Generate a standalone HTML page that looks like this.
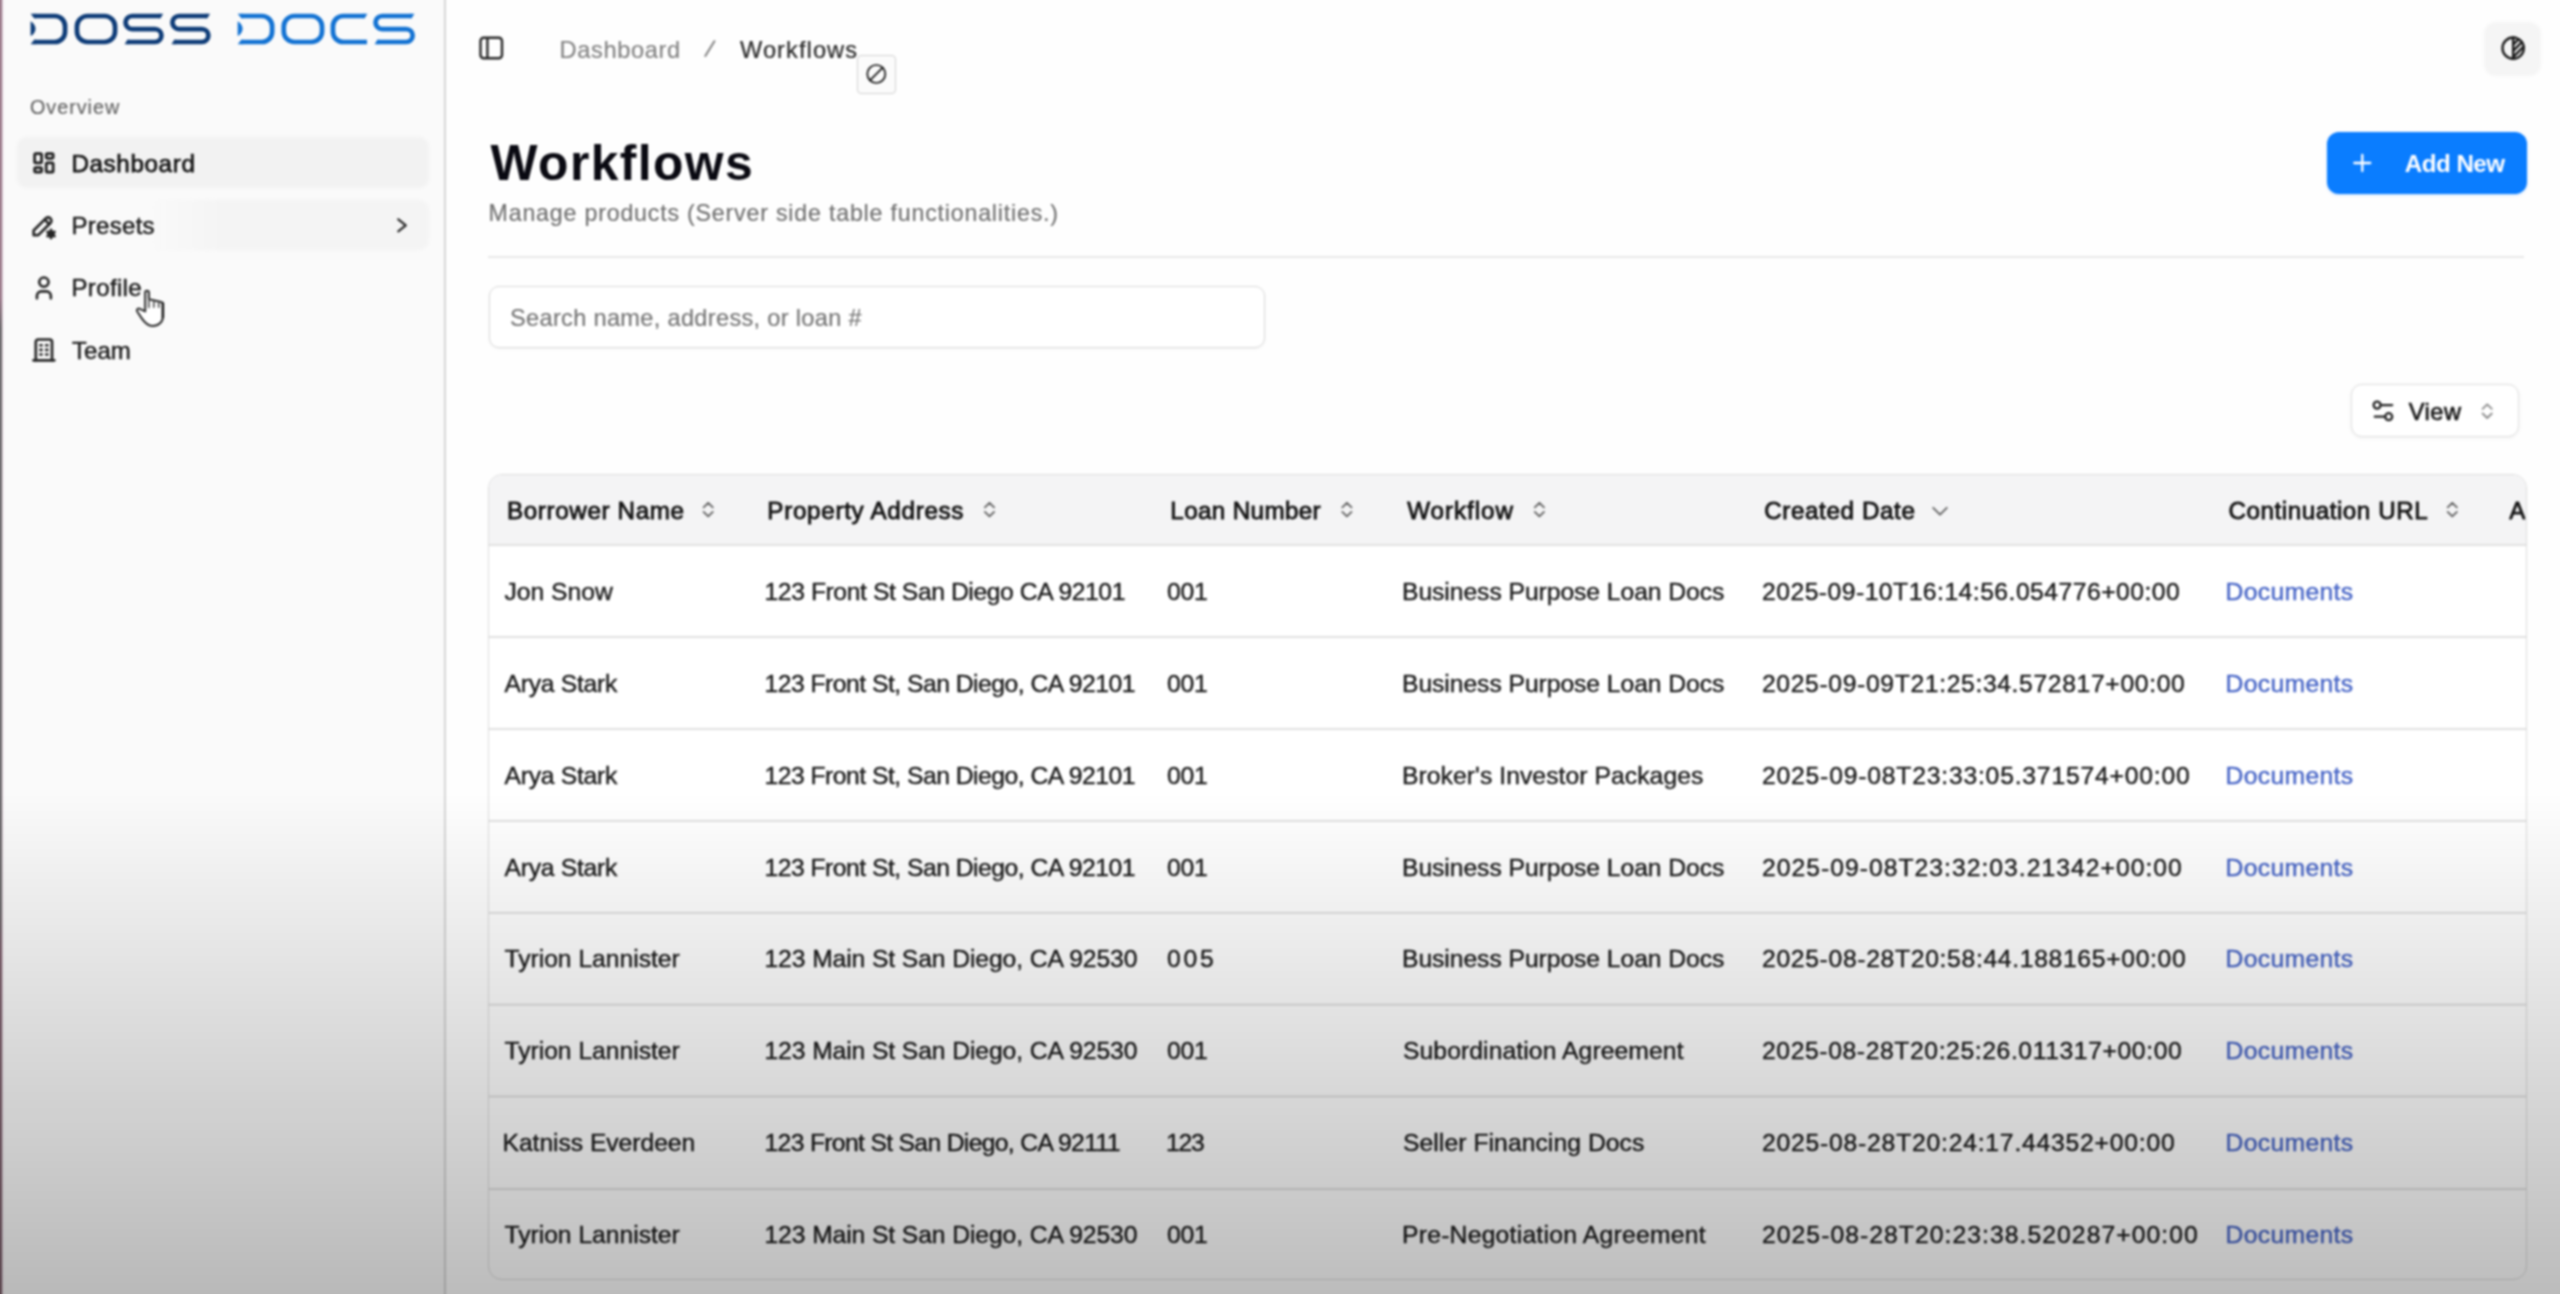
<!DOCTYPE html>
<html lang="en">
<head>
<meta charset="utf-8">
<title>Workflows - Doss Docs</title>
<style>
*{box-sizing:border-box;margin:0;padding:0}
html,body{width:2560px;height:1294px;overflow:hidden;background:#fefefe}
body{position:relative;font-family:"Liberation Sans",sans-serif;-webkit-font-smoothing:antialiased}
.a{position:absolute}
.t{position:absolute;white-space:nowrap;font-family:"Liberation Sans",sans-serif}
svg{position:absolute;overflow:visible}
.ic{fill:none;stroke:#262626;stroke-width:2;stroke-linecap:round;stroke-linejoin:round}
</style>
</head>
<body>
<div id="blurwrap" style="position:absolute;left:-24px;top:-24px;width:2608px;height:1342px;background:#fefefe;filter:blur(.8px)">
<div class="a" style="left:24px;top:24px;width:2560px;height:1294px">
<!-- sidebar -->
<div class="a" style="left:-24px;top:-24px;width:468px;height:1342px;background:#fafafa"></div>
<div class="a" style="left:444px;top:-24px;width:1.5px;height:1342px;background:#d6d6d6"></div>
<div class="a" style="left:-24px;top:-24px;width:26px;height:1342px;background:linear-gradient(to bottom,#9a7989 0px,#9a7989 322px,#6b696b 352px,#6b696b 934px,#7d606c 976px,#795d68 100%)"></div>
<div class="a" style="left:2px;top:-24px;width:2px;height:1342px;background:linear-gradient(to right,rgba(200,170,190,.55),rgba(250,240,250,0))"></div>
<!-- active / hover items -->
<div class="a" style="left:17px;top:137px;width:412px;height:51px;border-radius:10px;background:#f2f2f2;filter:blur(1.5px)"></div>
<div class="a" style="left:150px;top:200px;width:279px;height:50px;border-radius:10px;background:linear-gradient(to right,rgba(244,244,244,0),#f4f4f4 25%);filter:blur(1.5px)"></div>

<!-- header divider -->
<div class="a" style="left:488px;top:256px;width:2036px;height:2px;background:#e8e8e8"></div>

<!-- theme toggle -->
<div class="a" style="left:2483.5px;top:22px;width:57px;height:54px;border-radius:12px;background:#f5f5f5;filter:blur(1.2px)"></div>

<!-- tooltip box -->
<div class="a" style="left:857px;top:55px;width:39px;height:39px;border-radius:4px;background:#fbfbfb;border:1.2px solid #d2d2d2"></div>

<!-- Add New button -->
<div class="a" style="left:2327px;top:131.5px;width:200px;height:62px;border-radius:12px;background:#0a7dff;box-shadow:0 1px 3px rgba(10,125,255,.25)"></div>

<!-- search -->
<div class="a" style="left:488.5px;top:285.5px;width:776px;height:62px;border-radius:10px;background:#fff;border:1.5px solid #dadada;box-shadow:0 1px 3px rgba(0,0,0,.05)"></div>

<!-- View button -->
<div class="a" style="left:2351px;top:384px;width:168px;height:53px;border-radius:11px;background:#fff;border:1.5px solid #e0e0e0;box-shadow:0 1px 4px rgba(0,0,0,.06)"></div>

<!-- table -->
<div class="a" style="left:487.9px;top:473.5px;width:2039.6px;height:806.3px;border-radius:14px;border:1.5px solid #dddddd;background:#fff;overflow:hidden">
  <div class="a" style="left:0;top:0;width:2039px;height:69.5px;background:#f4f4f5"></div>
  <svg style="left:0;top:0" width="2039" height="806" viewBox="0 0 2039 806"><rect x="0" y="69.10" width="2039" height="1.8" fill="#dedede"/><rect x="0" y="161.10" width="2039" height="1.8" fill="#dedede"/><rect x="0" y="253.10" width="2039" height="1.8" fill="#dedede"/><rect x="0" y="345.00" width="2039" height="1.8" fill="#dedede"/><rect x="0" y="437.00" width="2039" height="1.8" fill="#dedede"/><rect x="0" y="528.80" width="2039" height="1.8" fill="#dedede"/><rect x="0" y="620.60" width="2039" height="1.8" fill="#dedede"/><rect x="0" y="713.20" width="2039" height="1.8" fill="#dedede"/></svg>
</div>
<!-- logo -->
<svg style="left:0;top:0" width="445" height="60" viewBox="0 0 445 60">
<path d="M34.40,16.0 H54.85 A10.2,10.2 0 0 1 65.05,26.2 V31.8 A10.2,10.2 0 0 1 54.85,42.0 H34.40" fill="none" stroke="#0e3c78" stroke-width="4.7"/>
<path d="M30.60,13.65 L35.90,13.65 L35.90,18.35 L34.20,18.35 Z" fill="#0e3c78"/>
<path d="M30.60,44.35 L35.90,44.35 L35.90,39.65 L34.20,39.65 Z" fill="#0e3c78"/>
<path d="M30.60,21.2 C33.80,23 35.50,26 35.50,28.7 C35.50,31.5 33.80,34.3 30.60,36.1 Z" fill="#0e3c78"/>
<rect x="76.95" y="16.0" width="38.10" height="26.0" rx="10.6" ry="10.6" fill="none" stroke="#0e3c78" stroke-width="4.7"/>
<path d="M160.20,16.0 H132.10 A6.55,6.55 0 0 0 132.10,29.1 H155.00 A6.45,6.45 0 0 1 155.00,42.0 H127.60" fill="none" stroke="#0e3c78" stroke-width="4.7"/>
<path d="M163.20,13.65 L158.70,13.65 L158.70,18.35 L160.40,18.35 Z" fill="#0e3c78"/>
<path d="M124.60,44.35 L129.10,44.35 L129.10,39.65 L127.40,39.65 Z" fill="#0e3c78"/>
<path d="M207.10,16.0 H179.00 A6.55,6.55 0 0 0 179.00,29.1 H201.90 A6.45,6.45 0 0 1 201.90,42.0 H174.50" fill="none" stroke="#0e3c78" stroke-width="4.7"/>
<path d="M210.10,13.65 L205.60,13.65 L205.60,18.35 L207.30,18.35 Z" fill="#0e3c78"/>
<path d="M171.50,44.35 L176.00,44.35 L176.00,39.65 L174.30,39.65 Z" fill="#0e3c78"/>
<path d="M241.50,16.0 H261.95 A10.2,10.2 0 0 1 272.15,26.2 V31.8 A10.2,10.2 0 0 1 261.95,42.0 H241.50" fill="none" stroke="#1272d3" stroke-width="4.7"/>
<path d="M237.70,13.65 L243.00,13.65 L243.00,18.35 L241.30,18.35 Z" fill="#1272d3"/>
<path d="M237.70,44.35 L243.00,44.35 L243.00,39.65 L241.30,39.65 Z" fill="#1272d3"/>
<path d="M237.70,21.2 C240.90,23 242.60,26 242.60,28.7 C242.60,31.5 240.90,34.3 237.70,36.1 Z" fill="#1272d3"/>
<rect x="283.75" y="16.0" width="38.30" height="26.0" rx="10.6" ry="10.6" fill="none" stroke="#1272d3" stroke-width="4.7"/>
<path d="M364.40,16.0 H343.15 A10.2,10.2 0 0 0 332.95,26.2 V31.8 A10.2,10.2 0 0 0 343.15,42.0 H367.00" fill="none" stroke="#1272d3" stroke-width="4.7"/>
<path d="M367.40,13.65 L362.90,13.65 L362.90,18.35 L364.60,18.35 Z" fill="#1272d3"/>
<path d="M411.40,16.0 H382.10 A6.55,6.55 0 0 0 382.10,29.1 H406.20 A6.45,6.45 0 0 1 406.20,42.0 H377.60" fill="none" stroke="#1272d3" stroke-width="4.7"/>
<path d="M414.40,13.65 L409.90,13.65 L409.90,18.35 L411.60,18.35 Z" fill="#1272d3"/>
<path d="M374.60,44.35 L379.10,44.35 L379.10,39.65 L377.40,39.65 Z" fill="#1272d3"/>
</svg>
<!-- icons -->
<svg style="left:29.5px;top:148.9px" width="27.8" height="27.8" viewBox="0 0 24 24"><g fill="none" stroke="#1f1f1f" stroke-width="2.35" stroke-linecap="round" stroke-linejoin="round"><path d="M5 4h4a1 1 0 0 1 1 1v6a1 1 0 0 1 -1 1h-4a1 1 0 0 1 -1 -1v-6a1 1 0 0 1 1 -1"/><path d="M5 16h4a1 1 0 0 1 1 1v2a1 1 0 0 1 -1 1h-4a1 1 0 0 1 -1 -1v-2a1 1 0 0 1 1 -1"/><path d="M15 12h4a1 1 0 0 1 1 1v6a1 1 0 0 1 -1 1h-4a1 1 0 0 1 -1 -1v-6a1 1 0 0 1 1 -1"/><path d="M15 4h4a1 1 0 0 1 1 1v2a1 1 0 0 1 -1 1h-4a1 1 0 0 1 -1 -1v-2a1 1 0 0 1 1 -1"/></g></svg>
<svg style="left:29.3px;top:211.5px" width="27.8" height="27.8" viewBox="0 0 24 24"><g fill="none" stroke="#262626" stroke-width="2.3" stroke-linecap="round" stroke-linejoin="round"><path d="M4 20h4l10.5 -10.5a2.828 2.828 0 1 0 -4 -4l-10.5 10.5v4"/><path d="M13.5 6.5l4 4"/><path d="M19.001 19m-2 0a2 2 0 1 0 4 0a2 2 0 1 0 -4 0" fill="#262626"/><path d="M19.001 15.5v1.5"/><path d="M19.001 21v1.5"/><path d="M22.032 17.25l-1.299 .75"/><path d="M17.27 20l-1.3 .75"/><path d="M15.97 17.25l1.3 .75"/><path d="M20.733 20l1.3 .75"/></g></svg>
<svg style="left:29.5px;top:273.9px" width="27.8" height="27.8" viewBox="0 0 24 24"><g fill="none" stroke="#262626" stroke-width="2.3" stroke-linecap="round" stroke-linejoin="round"><path d="M8 7a4 4 0 1 0 8 0a4 4 0 0 0 -8 0"/><path d="M6 21v-2a4 4 0 0 1 4 -4h4a4 4 0 0 1 4 4v2"/></g></svg>
<svg style="left:29.5px;top:336.4px" width="27.8" height="27.8" viewBox="0 0 24 24"><g fill="none" stroke="#262626" stroke-width="2.3" stroke-linecap="round" stroke-linejoin="round"><path d="M3 21l18 0"/><path d="M9 8l1 0"/><path d="M9 12l1 0"/><path d="M9 16l1 0"/><path d="M14 8l1 0"/><path d="M14 12l1 0"/><path d="M14 16l1 0"/><path d="M5 21v-16a2 2 0 0 1 2 -2h10a2 2 0 0 1 2 2v16"/></g></svg>
<svg style="left:2498.9px;top:33.7px" width="28.3" height="28.3" viewBox="0 0 24 24"><g fill="none" stroke="#1a1a1a" stroke-width="2" stroke-linecap="round" stroke-linejoin="round"><path d="M12 12m-9 0a9 9 0 1 0 18 0a9 9 0 1 0 -18 0"/><path d="M12 3l0 18"/><path d="M12 9l4.65 -4.65"/><path d="M12 14.3l7.37 -7.37"/><path d="M12 19.6l8.85 -8.85"/></g></svg>
<svg style="left:2368.9px;top:396.9px" width="27.8" height="27.8" viewBox="0 0 24 24"><g fill="none" stroke="#222" stroke-width="2" stroke-linecap="round" stroke-linejoin="round"><path d="M20 7h-9"/><path d="M14 17H5"/><path d="M17 17m-3 0a3 3 0 1 0 6 0a3 3 0 1 0 -6 0"/><path d="M7 7m-3 0a3 3 0 1 0 6 0a3 3 0 1 0 -6 0"/></g></svg>
<svg style="left:0;top:0" width="2560" height="600" viewBox="0 0 2560 600"><path d="M398.3,219.3 L405.8,225.3 L398.3,231.3" fill="none" stroke="#262626" stroke-width="2.2" stroke-linecap="round" stroke-linejoin="round"/><rect x="480.5" y="37.7" width="21.5" height="20.6" rx="3.2" fill="none" stroke="#262626" stroke-width="2.4"/><path d="M487.4,37.7 L487.4,58.3" fill="none" stroke="#262626" stroke-width="2.4" stroke-linecap="butt" stroke-linejoin="round"/><path d="M705.3,56.0 L714.4,41.2" fill="none" stroke="#808080" stroke-width="2" stroke-linecap="round" stroke-linejoin="round"/><circle cx="876.3" cy="74" r="9" fill="none" stroke="#111" stroke-width="1.7"/><path d="M869.9,80.4 L882.7,67.6" fill="none" stroke="#111" stroke-width="1.7" stroke-linecap="round" stroke-linejoin="round"/><path d="M2354.3,163.0 L2370.3,163.0" fill="none" stroke="#fff" stroke-width="2.3" stroke-linecap="round" stroke-linejoin="round"/><path d="M2362.3,155.0 L2362.3,171.0" fill="none" stroke="#fff" stroke-width="2.3" stroke-linecap="round" stroke-linejoin="round"/><path d="M703.6,507.3 L708.2,502.8 L712.8,507.3" fill="none" stroke="#606060" stroke-width="1.8" stroke-linecap="round" stroke-linejoin="round"/><path d="M703.6,511.9 L708.2,516.4 L712.8,511.9" fill="none" stroke="#606060" stroke-width="1.8" stroke-linecap="round" stroke-linejoin="round"/><path d="M984.9,507.3 L989.5,502.8 L994.1,507.3" fill="none" stroke="#606060" stroke-width="1.8" stroke-linecap="round" stroke-linejoin="round"/><path d="M984.9,511.9 L989.5,516.4 L994.1,511.9" fill="none" stroke="#606060" stroke-width="1.8" stroke-linecap="round" stroke-linejoin="round"/><path d="M1342.3,507.3 L1346.9,502.8 L1351.5,507.3" fill="none" stroke="#606060" stroke-width="1.8" stroke-linecap="round" stroke-linejoin="round"/><path d="M1342.3,511.9 L1346.9,516.4 L1351.5,511.9" fill="none" stroke="#606060" stroke-width="1.8" stroke-linecap="round" stroke-linejoin="round"/><path d="M1534.8,507.3 L1539.4,502.8 L1544.0,507.3" fill="none" stroke="#606060" stroke-width="1.8" stroke-linecap="round" stroke-linejoin="round"/><path d="M1534.8,511.9 L1539.4,516.4 L1544.0,511.9" fill="none" stroke="#606060" stroke-width="1.8" stroke-linecap="round" stroke-linejoin="round"/><path d="M2447.7,507.3 L2452.3,502.8 L2456.9,507.3" fill="none" stroke="#606060" stroke-width="1.8" stroke-linecap="round" stroke-linejoin="round"/><path d="M2447.7,511.9 L2452.3,516.4 L2456.9,511.9" fill="none" stroke="#606060" stroke-width="1.8" stroke-linecap="round" stroke-linejoin="round"/><path d="M2482.6,408.9 L2487.2,404.4 L2491.8,408.9" fill="none" stroke="#8c8c8c" stroke-width="1.8" stroke-linecap="round" stroke-linejoin="round"/><path d="M2482.6,413.5 L2487.2,418.0 L2491.8,413.5" fill="none" stroke="#8c8c8c" stroke-width="1.8" stroke-linecap="round" stroke-linejoin="round"/><path d="M1933.2,507.8 L1940.0,514.6 L1946.8,507.8" fill="none" stroke="#606060" stroke-width="1.8" stroke-linecap="round" stroke-linejoin="round"/></svg>

<!-- text -->
<div class="a" style="left:0;top:0;width:2560px;height:1294px;will-change:transform">
<div class="t" style="left:29.90px;top:98px;font-size:19.8px;line-height:19.8px;letter-spacing:0.992px;color:#626262;-webkit-text-stroke:0.15px #626262;">Overview</div>
<div class="t" style="left:71.40px;top:152px;font-size:24.2px;line-height:24.2px;letter-spacing:0.641px;color:#161616;-webkit-text-stroke:0.75px #161616;">Dashboard</div>
<div class="t" style="left:71.50px;top:214px;font-size:24.0px;line-height:24.0px;letter-spacing:0.289px;color:#1c1c1c;-webkit-text-stroke:0.5px #1c1c1c;">Presets</div>
<div class="t" style="left:71.50px;top:276px;font-size:24.0px;line-height:24.0px;letter-spacing:0.353px;color:#1c1c1c;-webkit-text-stroke:0.5px #1c1c1c;">Profile</div>
<div class="t" style="left:72.00px;top:339px;font-size:24.0px;line-height:24.0px;letter-spacing:0.035px;color:#1c1c1c;-webkit-text-stroke:0.5px #1c1c1c;">Team</div>
<div class="t" style="left:559.60px;top:39px;font-size:23.6px;line-height:23.6px;letter-spacing:0.625px;color:#808080;-webkit-text-stroke:0.15px #808080;">Dashboard</div>
<div class="t" style="left:740.00px;top:39px;font-size:23.6px;line-height:23.6px;letter-spacing:1.078px;color:#262626;-webkit-text-stroke:0.2px #262626;">Workflows</div>
<div class="t" style="left:490.60px;top:139px;font-size:49.8px;line-height:49.8px;letter-spacing:1.405px;color:#0a0a12;font-weight:700;">Workflows</div>
<div class="t" style="left:488.60px;top:202px;font-size:23.2px;line-height:23.2px;letter-spacing:0.804px;color:#6e6e6e;-webkit-text-stroke:0.15px #6e6e6e;">Manage products (Server side table functionalities.)</div>
<div class="t" style="left:510.00px;top:307px;font-size:23.6px;line-height:23.6px;letter-spacing:0.311px;color:#737373;-webkit-text-stroke:0.15px #737373;">Search name, address, or loan #</div>
<div class="t" style="left:2404.80px;top:152px;font-size:24.2px;line-height:24.2px;letter-spacing:-0.526px;color:#ffffff;font-weight:700;">Add New</div>
<div class="t" style="left:2408.70px;top:401px;font-size:23.6px;line-height:23.6px;letter-spacing:0.542px;color:#161616;-webkit-text-stroke:0.65px #161616;">View</div>
<div class="t" style="left:507.00px;top:499px;font-size:24.2px;line-height:24.2px;letter-spacing:0.641px;color:#141414;-webkit-text-stroke:0.85px #141414;">Borrower Name</div>
<div class="t" style="left:767.30px;top:499px;font-size:24.2px;line-height:24.2px;letter-spacing:0.709px;color:#141414;-webkit-text-stroke:0.85px #141414;">Property Address</div>
<div class="t" style="left:1170.30px;top:499px;font-size:24.2px;line-height:24.2px;letter-spacing:0.380px;color:#141414;-webkit-text-stroke:0.85px #141414;">Loan Number</div>
<div class="t" style="left:1407.20px;top:499px;font-size:24.2px;line-height:24.2px;letter-spacing:0.966px;color:#141414;-webkit-text-stroke:0.85px #141414;">Workflow</div>
<div class="t" style="left:1764.20px;top:499px;font-size:24.2px;line-height:24.2px;letter-spacing:0.617px;color:#141414;-webkit-text-stroke:0.85px #141414;">Created Date</div>
<div class="t" style="left:2228.40px;top:499px;font-size:24.2px;line-height:24.2px;letter-spacing:0.555px;color:#141414;-webkit-text-stroke:0.85px #141414;">Continuation URL</div>
<div class="t" style="left:2509.20px;top:499px;font-size:24.2px;line-height:24.2px;letter-spacing:0.000px;color:#141414;-webkit-text-stroke:0.85px #141414;clip-path:inset(-5px 0 -5px 0);">A</div>
<div class="t" style="left:504.50px;top:580px;font-size:24.7px;line-height:24.7px;letter-spacing:-0.013px;color:#1a1a1a;-webkit-text-stroke:0.4px #1a1a1a;">Jon Snow</div>
<div class="t" style="left:764.50px;top:580px;font-size:24.7px;line-height:24.7px;letter-spacing:-0.414px;color:#1a1a1a;-webkit-text-stroke:0.4px #1a1a1a;">123 Front St San Diego CA 92101</div>
<div class="t" style="left:1167.00px;top:580px;font-size:24.7px;line-height:24.7px;letter-spacing:-0.230px;color:#1a1a1a;-webkit-text-stroke:0.4px #1a1a1a;">001</div>
<div class="t" style="left:1402.00px;top:580px;font-size:24.7px;line-height:24.7px;letter-spacing:-0.061px;color:#1a1a1a;-webkit-text-stroke:0.4px #1a1a1a;">Business Purpose Loan Docs</div>
<div class="t" style="left:1762.00px;top:580px;font-size:24.7px;line-height:24.7px;letter-spacing:0.479px;color:#1a1a1a;-webkit-text-stroke:0.4px #1a1a1a;">2025-09-10T16:14:56.054776+00:00</div>
<div class="t" style="left:2225.60px;top:580px;font-size:24.7px;line-height:24.7px;letter-spacing:0.323px;color:#4664c6;-webkit-text-stroke:0.4px #4664c6;">Documents</div>
<div class="t" style="left:504.50px;top:672px;font-size:24.7px;line-height:24.7px;letter-spacing:-0.266px;color:#1a1a1a;-webkit-text-stroke:0.4px #1a1a1a;">Arya Stark</div>
<div class="t" style="left:764.50px;top:672px;font-size:24.7px;line-height:24.7px;letter-spacing:-0.505px;color:#1a1a1a;-webkit-text-stroke:0.4px #1a1a1a;">123 Front St, San Diego, CA 92101</div>
<div class="t" style="left:1167.00px;top:672px;font-size:24.7px;line-height:24.7px;letter-spacing:-0.230px;color:#1a1a1a;-webkit-text-stroke:0.4px #1a1a1a;">001</div>
<div class="t" style="left:1402.00px;top:672px;font-size:24.7px;line-height:24.7px;letter-spacing:-0.061px;color:#1a1a1a;-webkit-text-stroke:0.4px #1a1a1a;">Business Purpose Loan Docs</div>
<div class="t" style="left:1762.00px;top:672px;font-size:24.7px;line-height:24.7px;letter-spacing:0.640px;color:#1a1a1a;-webkit-text-stroke:0.4px #1a1a1a;">2025-09-09T21:25:34.572817+00:00</div>
<div class="t" style="left:2225.60px;top:672px;font-size:24.7px;line-height:24.7px;letter-spacing:0.323px;color:#4664c6;-webkit-text-stroke:0.4px #4664c6;">Documents</div>
<div class="t" style="left:504.50px;top:764px;font-size:24.7px;line-height:24.7px;letter-spacing:-0.266px;color:#1a1a1a;-webkit-text-stroke:0.4px #1a1a1a;">Arya Stark</div>
<div class="t" style="left:764.50px;top:764px;font-size:24.7px;line-height:24.7px;letter-spacing:-0.505px;color:#1a1a1a;-webkit-text-stroke:0.4px #1a1a1a;">123 Front St, San Diego, CA 92101</div>
<div class="t" style="left:1167.00px;top:764px;font-size:24.7px;line-height:24.7px;letter-spacing:-0.230px;color:#1a1a1a;-webkit-text-stroke:0.4px #1a1a1a;">001</div>
<div class="t" style="left:1402.00px;top:764px;font-size:24.7px;line-height:24.7px;letter-spacing:0.065px;color:#1a1a1a;-webkit-text-stroke:0.4px #1a1a1a;">Broker's Investor Packages</div>
<div class="t" style="left:1762.00px;top:764px;font-size:24.7px;line-height:24.7px;letter-spacing:0.801px;color:#1a1a1a;-webkit-text-stroke:0.4px #1a1a1a;">2025-09-08T23:33:05.371574+00:00</div>
<div class="t" style="left:2225.60px;top:764px;font-size:24.7px;line-height:24.7px;letter-spacing:0.323px;color:#4664c6;-webkit-text-stroke:0.4px #4664c6;">Documents</div>
<div class="t" style="left:504.50px;top:856px;font-size:24.7px;line-height:24.7px;letter-spacing:-0.266px;color:#1a1a1a;-webkit-text-stroke:0.4px #1a1a1a;">Arya Stark</div>
<div class="t" style="left:764.50px;top:856px;font-size:24.7px;line-height:24.7px;letter-spacing:-0.505px;color:#1a1a1a;-webkit-text-stroke:0.4px #1a1a1a;">123 Front St, San Diego, CA 92101</div>
<div class="t" style="left:1167.00px;top:856px;font-size:24.7px;line-height:24.7px;letter-spacing:-0.230px;color:#1a1a1a;-webkit-text-stroke:0.4px #1a1a1a;">001</div>
<div class="t" style="left:1402.00px;top:856px;font-size:24.7px;line-height:24.7px;letter-spacing:-0.061px;color:#1a1a1a;-webkit-text-stroke:0.4px #1a1a1a;">Business Purpose Loan Docs</div>
<div class="t" style="left:1762.00px;top:856px;font-size:24.7px;line-height:24.7px;letter-spacing:1.019px;color:#1a1a1a;-webkit-text-stroke:0.4px #1a1a1a;">2025-09-08T23:32:03.21342+00:00</div>
<div class="t" style="left:2225.60px;top:856px;font-size:24.7px;line-height:24.7px;letter-spacing:0.323px;color:#4664c6;-webkit-text-stroke:0.4px #4664c6;">Documents</div>
<div class="t" style="left:504.50px;top:947px;font-size:24.7px;line-height:24.7px;letter-spacing:-0.028px;color:#1a1a1a;-webkit-text-stroke:0.4px #1a1a1a;">Tyrion Lannister</div>
<div class="t" style="left:764.50px;top:947px;font-size:24.7px;line-height:24.7px;letter-spacing:-0.106px;color:#1a1a1a;-webkit-text-stroke:0.4px #1a1a1a;">123 Main St San Diego, CA 92530</div>
<div class="t" style="left:1167.00px;top:947px;font-size:24.7px;line-height:24.7px;letter-spacing:2.770px;color:#1a1a1a;-webkit-text-stroke:0.4px #1a1a1a;">005</div>
<div class="t" style="left:1402.00px;top:947px;font-size:24.7px;line-height:24.7px;letter-spacing:-0.061px;color:#1a1a1a;-webkit-text-stroke:0.4px #1a1a1a;">Business Purpose Loan Docs</div>
<div class="t" style="left:1762.00px;top:947px;font-size:24.7px;line-height:24.7px;letter-spacing:0.672px;color:#1a1a1a;-webkit-text-stroke:0.4px #1a1a1a;">2025-08-28T20:58:44.188165+00:00</div>
<div class="t" style="left:2225.60px;top:947px;font-size:24.7px;line-height:24.7px;letter-spacing:0.323px;color:#4664c6;-webkit-text-stroke:0.4px #4664c6;">Documents</div>
<div class="t" style="left:504.50px;top:1039px;font-size:24.7px;line-height:24.7px;letter-spacing:-0.028px;color:#1a1a1a;-webkit-text-stroke:0.4px #1a1a1a;">Tyrion Lannister</div>
<div class="t" style="left:764.50px;top:1039px;font-size:24.7px;line-height:24.7px;letter-spacing:-0.106px;color:#1a1a1a;-webkit-text-stroke:0.4px #1a1a1a;">123 Main St San Diego, CA 92530</div>
<div class="t" style="left:1167.00px;top:1039px;font-size:24.7px;line-height:24.7px;letter-spacing:-0.230px;color:#1a1a1a;-webkit-text-stroke:0.4px #1a1a1a;">001</div>
<div class="t" style="left:1403.00px;top:1039px;font-size:24.7px;line-height:24.7px;letter-spacing:0.086px;color:#1a1a1a;-webkit-text-stroke:0.4px #1a1a1a;">Subordination Agreement</div>
<div class="t" style="left:1762.00px;top:1039px;font-size:24.7px;line-height:24.7px;letter-spacing:0.602px;color:#1a1a1a;-webkit-text-stroke:0.4px #1a1a1a;">2025-08-28T20:25:26.011317+00:00</div>
<div class="t" style="left:2225.60px;top:1039px;font-size:24.7px;line-height:24.7px;letter-spacing:0.323px;color:#4664c6;-webkit-text-stroke:0.4px #4664c6;">Documents</div>
<div class="t" style="left:502.50px;top:1131px;font-size:24.7px;line-height:24.7px;letter-spacing:-0.051px;color:#1a1a1a;-webkit-text-stroke:0.4px #1a1a1a;">Katniss Everdeen</div>
<div class="t" style="left:764.50px;top:1131px;font-size:24.7px;line-height:24.7px;letter-spacing:-0.665px;color:#1a1a1a;-webkit-text-stroke:0.4px #1a1a1a;">123 Front St San Diego, CA 92111</div>
<div class="t" style="left:1166.00px;top:1131px;font-size:24.7px;line-height:24.7px;letter-spacing:-1.230px;color:#1a1a1a;-webkit-text-stroke:0.4px #1a1a1a;">123</div>
<div class="t" style="left:1403.00px;top:1131px;font-size:24.7px;line-height:24.7px;letter-spacing:0.061px;color:#1a1a1a;-webkit-text-stroke:0.4px #1a1a1a;">Seller Financing Docs</div>
<div class="t" style="left:1762.00px;top:1131px;font-size:24.7px;line-height:24.7px;letter-spacing:0.785px;color:#1a1a1a;-webkit-text-stroke:0.4px #1a1a1a;">2025-08-28T20:24:17.44352+00:00</div>
<div class="t" style="left:2225.60px;top:1131px;font-size:24.7px;line-height:24.7px;letter-spacing:0.323px;color:#4664c6;-webkit-text-stroke:0.4px #4664c6;">Documents</div>
<div class="t" style="left:504.50px;top:1223px;font-size:24.7px;line-height:24.7px;letter-spacing:-0.028px;color:#1a1a1a;-webkit-text-stroke:0.4px #1a1a1a;">Tyrion Lannister</div>
<div class="t" style="left:764.50px;top:1223px;font-size:24.7px;line-height:24.7px;letter-spacing:-0.106px;color:#1a1a1a;-webkit-text-stroke:0.4px #1a1a1a;">123 Main St San Diego, CA 92530</div>
<div class="t" style="left:1167.00px;top:1223px;font-size:24.7px;line-height:24.7px;letter-spacing:-0.230px;color:#1a1a1a;-webkit-text-stroke:0.4px #1a1a1a;">001</div>
<div class="t" style="left:1402.00px;top:1223px;font-size:24.7px;line-height:24.7px;letter-spacing:0.238px;color:#1a1a1a;-webkit-text-stroke:0.4px #1a1a1a;">Pre-Negotiation Agreement</div>
<div class="t" style="left:1762.00px;top:1223px;font-size:24.7px;line-height:24.7px;letter-spacing:1.059px;color:#1a1a1a;-webkit-text-stroke:0.4px #1a1a1a;">2025-08-28T20:23:38.520287+00:00</div>
<div class="t" style="left:2225.60px;top:1223px;font-size:24.7px;line-height:24.7px;letter-spacing:0.323px;color:#4664c6;-webkit-text-stroke:0.4px #4664c6;">Documents</div>
</div>
<!-- cursor -->
<svg style="left:0;top:0" width="445" height="400" viewBox="0 0 445 400">
<path d="M145.2,311.4 V292.6 A1.85,1.85 0 0 1 148.9,292.6 V299.2 L161.2,301.9 Q162.9,302.3 162.9,304 V316.4 C162.9,322 158.6,325.9 152.6,325.9 C147.6,325.9 144.6,322.6 141.6,318.1 L137.2,311.5 C136.1,309.6 138.2,307.7 139.9,308.8 Z" fill="#fff" stroke="#2b2b2b" stroke-width="2" stroke-linejoin="round"/>
<path d="M148.9,299.2 V307.4 M153.8,300.6 V307.2 M158.7,301.6 V307.2" fill="none" stroke="#4a4a4a" stroke-width="1.6" stroke-linecap="round"/>
<path d="M162.9,303.5 V317" fill="none" stroke="#111" stroke-width="2.4" stroke-linecap="round"/>
</svg>
<!-- video-player bottom gradient overlay -->
<div class="a" style="left:-24px;top:792px;width:2608px;height:526px;pointer-events:none;background:linear-gradient(to bottom,rgba(0,0,0,0) 0px,rgba(0,0,0,.258) 502px,rgba(0,0,0,.27) 526px)"></div>
</div>
</div>
</body>
</html>
